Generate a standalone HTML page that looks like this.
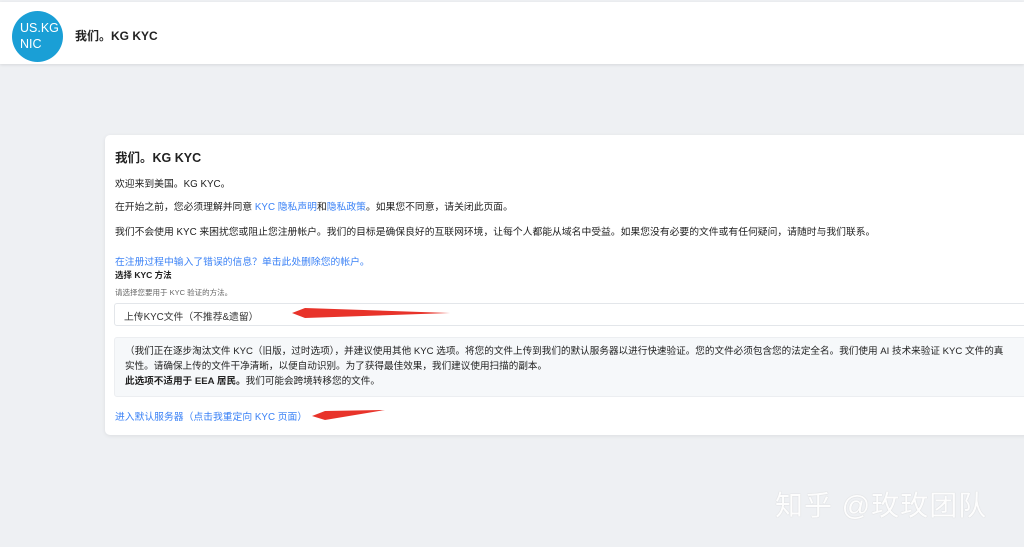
<!DOCTYPE html>
<html><head><meta charset="utf-8"><style>
*{margin:0;padding:0;box-sizing:border-box}
body{width:1024px;height:547px;background:#eef0f3;font-family:"Liberation Sans","Noto Sans CJK SC",sans-serif;color:#222;position:relative;overflow:hidden}
.hdr{position:absolute;left:0;top:2px;width:1024px;height:62px;background:#fff;box-shadow:0 1px 3px rgba(0,0,0,.1)}
.logo{position:absolute;left:12px;top:9px;width:51px;height:51px;border-radius:50%;background:#1a9fd6;color:#fff;font-size:12.5px;line-height:16px;padding:9px 0 0 8px}
.ht{position:absolute;left:75px;top:25px;font-size:12px;font-weight:bold}
.card{position:absolute;left:105px;top:135px;width:940px;height:300px;background:#fff;border-radius:5px;box-shadow:0 1px 4px rgba(0,0,0,.08)}
.card>*{position:absolute;left:10px;white-space:nowrap}
a{color:#3b82f6;text-decoration:none}
.t{font-size:9.8px}
.sel{left:9px;width:940px;top:168px;height:23px;border:1px solid #e3e6ea;border-radius:3px;font-size:9.8px;padding:5px 0 0 9px;color:#333}
.box{left:9px;width:940px;top:202px;height:60px;background:#f6f8fa;border:1px solid #eceef1;border-radius:3px;font-size:9.6px;line-height:15px;padding:6px 0 0 10px;color:#222}
.wm{position:absolute;left:775px;top:484px;font-size:28px;color:#fff;letter-spacing:1px;opacity:.9;text-shadow:0 0 1px #bbb}
</style></head><body>
<div class="hdr"><div class="logo">US.KG<br>NIC</div><div class="ht">我们。KG KYC</div></div>
<div class="card">
<div style="top:12px;font-size:12.5px;font-weight:bold">我们。KG KYC</div>
<div class="t" style="top:41px">欢迎来到美国。KG KYC。</div>
<div class="t" style="top:64px">在开始之前，您必须理解并同意 <a>KYC 隐私声明</a>和<a>隐私政策</a>。如果您不同意，请关闭此页面。</div>
<div class="t" style="top:89px">我们不会使用 KYC 来困扰您或阻止您注册帐户。我们的目标是确保良好的互联网环境，让每个人都能从域名中受益。如果您没有必要的文件或有任何疑问，请随时与我们联系。</div>
<div class="t" style="top:119px"><a>在注册过程中输入了错误的信息？单击此处删除您的帐户。</a></div>
<div style="top:134px;font-size:8.5px;font-weight:bold">选择 KYC 方法</div>
<div style="top:152px;font-size:7.5px;color:#666">请选择您要用于 KYC 验证的方法。</div>
<div class="sel">上传KYC文件（不推荐&amp;遗留）</div>
<div class="box">（我们正在逐步淘汰文件 KYC（旧版，过时选项），并建议使用其他 KYC 选项。将您的文件上传到我们的默认服务器以进行快速验证。您的文件必须包含您的法定全名。我们使用 AI 技术来验证 KYC 文件的真<br>实性。请确保上传的文件干净清晰，以便自动识别。为了获得最佳效果，我们建议使用扫描的副本。<br><b>此选项不适用于 EEA 居民。</b>我们可能会跨境转移您的文件。</div>
<div class="t" style="top:274px"><a>进入默认服务器（点击我重定向 KYC 页面）</a></div>
</div>
<svg style="position:absolute;left:0;top:0" width="1024" height="547">
<polygon points="292,313 305,308 450,313 305,318" fill="#e8332a"/>
<polygon points="312,416 325,411 385,410 325,420" fill="#e8332a"/>
</svg>
<div class="wm">知乎 @玫玫团队</div>
</body></html>
